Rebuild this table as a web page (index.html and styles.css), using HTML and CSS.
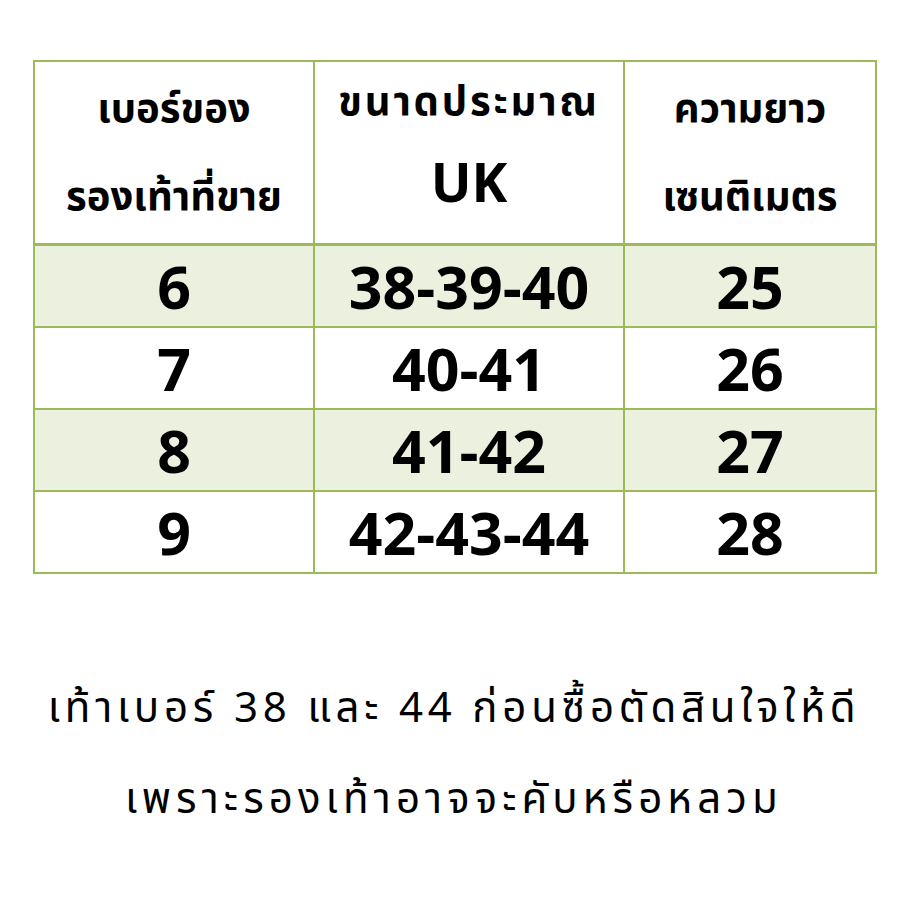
FILE: index.html
```html
<!DOCTYPE html>
<html lang="th">
<head>
<meta charset="utf-8">
<link rel="stylesheet" href="styles.css">
</head>
<body>
<div class="page">
  <table class="size-table">
    <colgroup>
      <col class="c1">
      <col class="c2">
      <col class="c3">
    </colgroup>
    <thead>
      <tr>
        <th><span class="hl l1">เบอร์ของ</span><span class="hl l2">รองเท้าที่ขาย</span></th>
        <th><span class="hl l1 up">ขนาดประมาณ</span><span class="hl uk">UK</span></th>
        <th><span class="hl l1">ความยาว</span><span class="hl l2">เซนติเมตร</span></th>
      </tr>
    </thead>
    <tbody>
      <tr class="alt"><td>6</td><td>38-39-40</td><td>25</td></tr>
      <tr><td>7</td><td>40-41</td><td>26</td></tr>
      <tr class="alt"><td>8</td><td>41-42</td><td>27</td></tr>
      <tr><td>9</td><td>42-43-44</td><td>28</td></tr>
    </tbody>
  </table>
  <div class="note">
    <p class="n1">เท้าเบอร์ 38 และ 44 ก่อนซื้อตัดสินใจให้ดี</p>
    <p class="n2">เพราะรองเท้าอาจจะคับหรือหลวม</p>
  </div>
</div>
</body>
</html>
```
FILE: styles.css
```css
html, body {
  margin: 0;
  padding: 0;
  background: #ffffff;
}
.page {
  width: 900px;
  height: 900px;
  padding: 60px 0 0 33px;
  box-sizing: border-box;
  overflow: hidden;
}
.size-table {
  border-collapse: collapse;
  width: 842px;
  table-layout: fixed;
}
.c1 { width: 280px; }
.c2 { width: 310px; }
.c3 { width: 252px; }
.size-table th, .size-table td {
  border: 2px solid #9bbb59;
  text-align: center;
  color: #000;
  padding: 0;
}
.size-table th {
  height: 181px;
  border-bottom-width: 3px;
  font-family: "Noto Sans Thai", "Noto Sans", sans-serif;
  font-weight: bold;
  font-size: 40px;
  vertical-align: top;
}
.hl {
  display: block;
  white-space: nowrap;
}
.l1 {
  margin-top: 22px;
  line-height: 52px;
}
.l2 {
  margin-top: 36px;
  line-height: 52px;
}
.up {
  margin-top: 15px;
  letter-spacing: 2.8px;
}
.uk {
  margin-top: 26px;
  line-height: 52px;
  font-family: "Open Sans", "Liberation Sans", sans-serif;
  font-size: 54px;
}
.size-table td {
  height: 80px;
  font-family: "Open Sans", "Liberation Sans", sans-serif;
  font-weight: bold;
  font-size: 59px;
  letter-spacing: 0;
}
.size-table tr.alt td {
  background: #ebf1de;
}
.note {
  margin-top: 90px;
  text-align: center;
  font-family: "Noto Sans Thai", "Noto Sans", sans-serif;
  font-size: 42px;
  color: #000;
  margin-left: -25px;
}
.note p {
  margin: 0;
  line-height: 91px;
  white-space: nowrap;
}
.n1 {
  letter-spacing: 4.8px;
}
.n2 {
  letter-spacing: 5.1px;
}
```
